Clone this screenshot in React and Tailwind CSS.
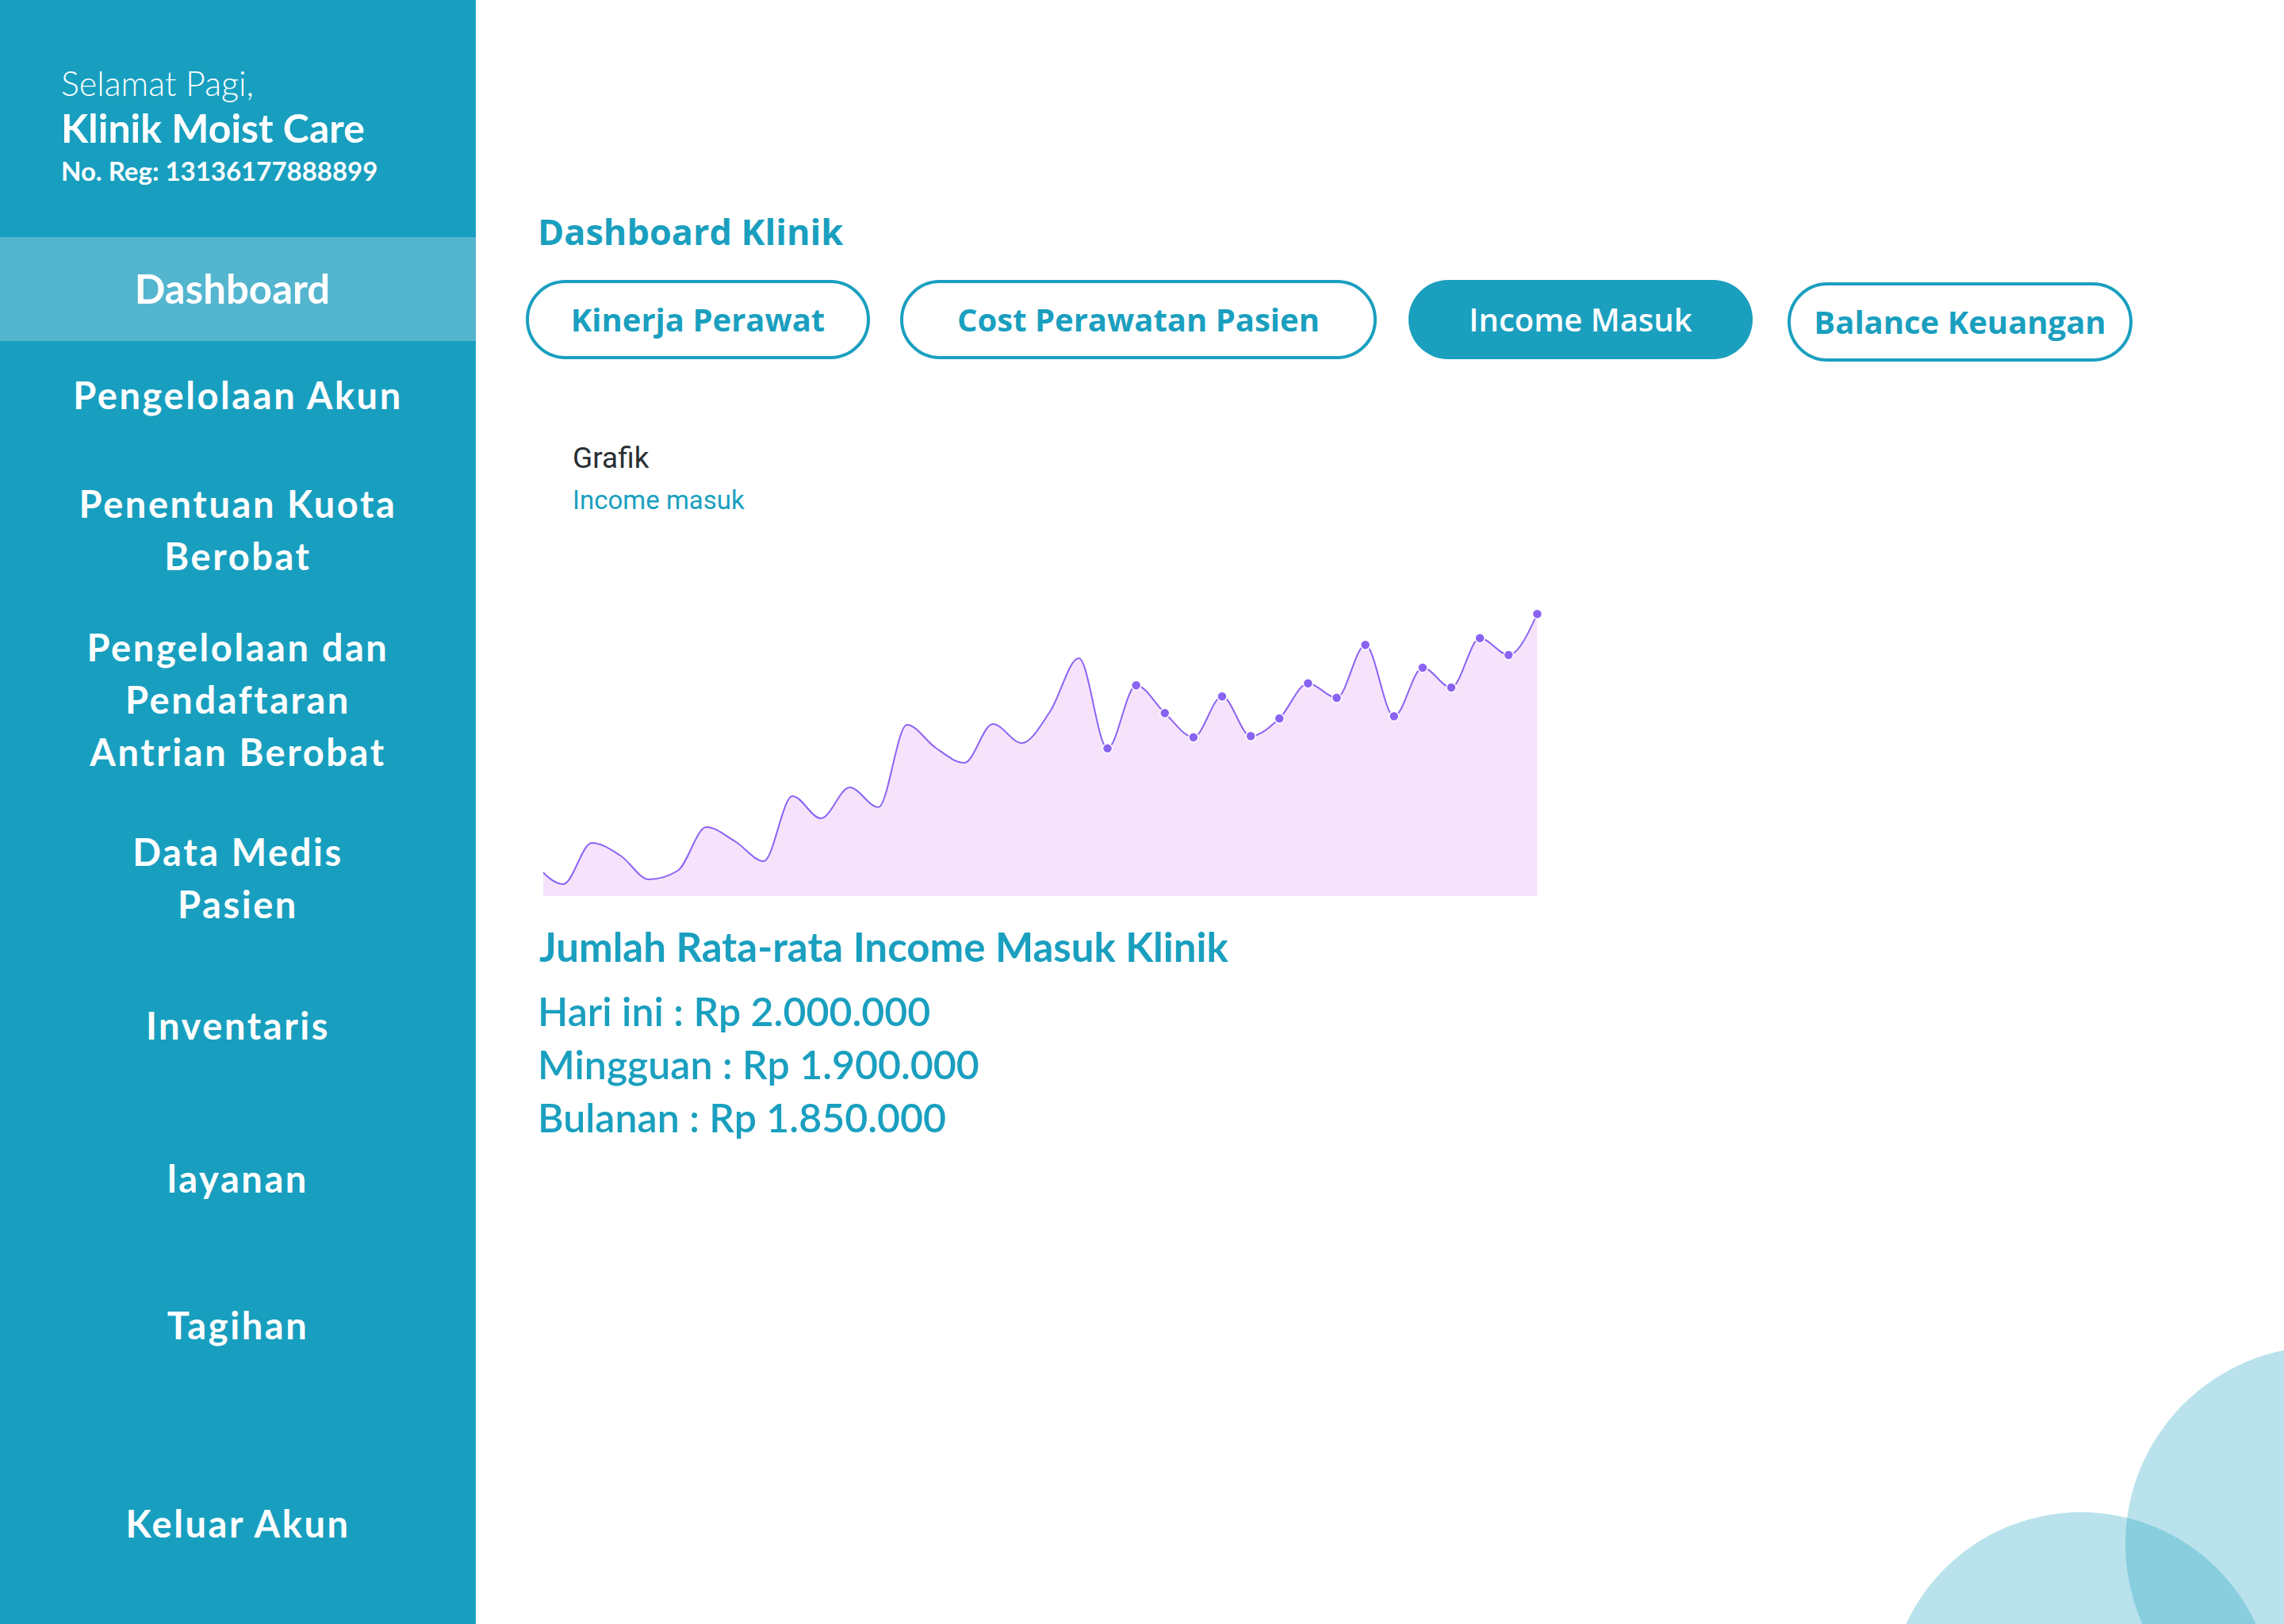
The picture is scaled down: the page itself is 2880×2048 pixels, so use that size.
import React from "react";

const YS = [368,394,342,358,388,377,322,340,365,283,311,272,297,193,222,241,192,216,176,109,222.7,143.3,178.3,208.7,157.3,207.3,185,140.7,159,92.3,182.3,121,146,83.7,105,53.3];
const STEP = 36.125;
const H = 409;
const X0 = 11;
const XMAX = STEP * (YS.length - 1);
const PTS = YS.map((y, i) => [i * STEP, y]);

function sign(v) {
  return v < 0 ? -1 : 1;
}

function monotonePath(pts) {
  const n = pts.length;
  const t = new Array(n).fill(0);
  for (let i = 1; i < n - 1; i++) {
    const h0 = pts[i][0] - pts[i - 1][0];
    const h1 = pts[i + 1][0] - pts[i][0];
    const s0 = (pts[i][1] - pts[i - 1][1]) / h0;
    const s1 = (pts[i + 1][1] - pts[i][1]) / h1;
    const p = (s0 * h1 + s1 * h0) / (h0 + h1);
    t[i] = (sign(s0) + sign(s1)) * Math.min(Math.abs(s0), Math.abs(s1), 0.5 * Math.abs(p)) || 0;
  }
  const h = pts[1][0] - pts[0][0];
  t[0] = (3 * (pts[1][1] - pts[0][1]) / h - t[1]) / 2;
  const hl = pts[n - 1][0] - pts[n - 2][0];
  t[n - 1] = (3 * (pts[n - 1][1] - pts[n - 2][1]) / hl - t[n - 2]) / 2;
  let d = `M ${pts[0][0]} ${pts[0][1]}`;
  for (let i = 0; i < n - 1; i++) {
    const [x0, y0] = pts[i];
    const [x1, y1] = pts[i + 1];
    const dx = (x1 - x0) / 3;
    d += ` C ${x0 + dx} ${y0 + dx * t[i]} ${x1 - dx} ${y1 - dx * t[i + 1]} ${x1} ${y1}`;
  }
  return d;
}

function Chart() {
  const line = monotonePath(PTS);
  const area = `${line} L ${XMAX} ${H} L 0 ${H} Z`;
  const w = XMAX - X0;
  return (
    <svg width={w} height={H} viewBox={`${X0} 0 ${w} ${H}`} className="block overflow-visible">
      <defs>
        <clipPath id="chartclip">
          <rect x={X0} y={-20} width={w} height={H + 20} />
        </clipPath>
      </defs>
      <g clipPath="url(#chartclip)">
        <path d={area} fill="#f6e3fb" />
        <path d={line} fill="none" stroke="#8b63f3" strokeWidth="2" />
      </g>
      {PTS.slice(20).map(([x, y], i) => (
        <circle key={i} cx={x} cy={y} r="6" fill="#8b63f3" stroke="#ffffff" strokeWidth="1.5" />
      ))}
    </svg>
  );
}

const side = { fontFamily: "Lato, 'Noto Sans', sans-serif" };
const open = { fontFamily: "'Open Sans', 'Noto Sans', sans-serif" };
const roboto = { fontFamily: "Roboto, 'Noto Sans', sans-serif" };

function MenuItem({ lines, mt }) {
  return (
    <div className={`${mt} text-center text-[47px] font-bold leading-[66px] tracking-[0.055em]`}>
      {lines.map((l) => (
        <div key={l}>{l}</div>
      ))}
    </div>
  );
}

export default function App() {
  return (
    <div className="relative flex h-[2048px] w-[2880px] overflow-hidden bg-white">
      <aside className="flex w-[600px] shrink-0 flex-col bg-[#189fbf] text-white" style={side}>
        <div className="pl-[77px] pt-[77px]">
          <div className="text-[43px] font-light leading-[56px]">Selamat Pagi,</div>
          <div className="text-[50px] font-bold leading-[56px]">Klinik Moist Care</div>
          <div className="text-[33px] font-bold leading-[52px]">No. Reg: 13136177888899</div>
        </div>
        <div className="mt-[58px] flex h-[131px] items-center justify-center bg-[#54b5cf] pr-[14px] text-[51px] font-bold">
          Dashboard
        </div>
        <MenuItem mt="mt-[35px]" lines={["Pengelolaan Akun"]} />
        <MenuItem mt="mt-[71px]" lines={["Penentuan Kuota", "Berobat"]} />
        <MenuItem mt="mt-[49px]" lines={["Pengelolaan dan", "Pendaftaran", "Antrian Berobat"]} />
        <MenuItem mt="mt-[60px]" lines={["Data Medis", "Pasien"]} />
        <MenuItem mt="mt-[87px]" lines={["Inventaris"]} />
        <MenuItem mt="mt-[127px]" lines={["layanan"]} />
        <MenuItem mt="mt-[119px]" lines={["Tagihan"]} />
        <MenuItem mt="mt-[184px]" lines={["Keluar Akun"]} />
      </aside>

      <main className="flex flex-1 flex-col pl-[63px] text-[#1a9fbf]">
        <h1 className="ml-[15px] mt-[262px] text-[45px] font-bold leading-[60px]" style={open}>
          Dashboard Klinik
        </h1>
        <div className="mt-[28px] flex items-center text-[40px] font-bold" style={open}>
          <button className="flex h-[100px] w-[434px] items-center justify-center rounded-[50px] border-[4px] border-[#1a9fbf] bg-white">
            Kinerja Perawat
          </button>
          <button className="ml-[38px] flex h-[100px] w-[601px] items-center justify-center rounded-[50px] border-[4px] border-[#1a9fbf] bg-white">
            Cost Perawatan Pasien
          </button>
          <button className="ml-[40px] flex h-[100px] w-[434px] items-center justify-center rounded-[50px] bg-[#1a9fbf] font-semibold text-white">
            Income Masuk
          </button>
          <button className="ml-[44px] mt-[6px] flex h-[100px] w-[435px] items-center justify-center rounded-[50px] border-[4px] border-[#1a9fbf] bg-white">
            Balance Keuangan
          </button>
        </div>

        <div className="ml-[59px] mt-[100px] text-[37px] leading-[44px] text-[#2a2f33]" style={roboto}>
          Grafik
        </div>
        <div className="ml-[59px] mt-[11px] text-[33px] leading-[40px]" style={roboto}>
          Income masuk
        </div>
        <div className="ml-[22px] mt-[70px]">
          <Chart />
        </div>

        <div className="ml-[17px] mt-[34px] text-[51px] font-bold leading-[60px]" style={side}>
          Jumlah Rata-rata Income Masuk Klinik
        </div>
        <div className="ml-[15px] mt-[18px] text-[50px] font-semibold leading-[67px]" style={side}>
          <div>Hari ini : Rp 2.000.000</div>
          <div>Mingguan : Rp 1.900.000</div>
          <div>Bulanan : Rp 1.850.000</div>
        </div>
      </main>

      <div className="absolute left-[2680px] top-[1698px] h-[498px] w-[498px] rounded-full bg-[#189fbf]/30" />
      <div className="absolute left-[2381px] top-[1907px] h-[486px] w-[486px] rounded-full bg-[#189fbf]/30" />
    </div>
  );
}
